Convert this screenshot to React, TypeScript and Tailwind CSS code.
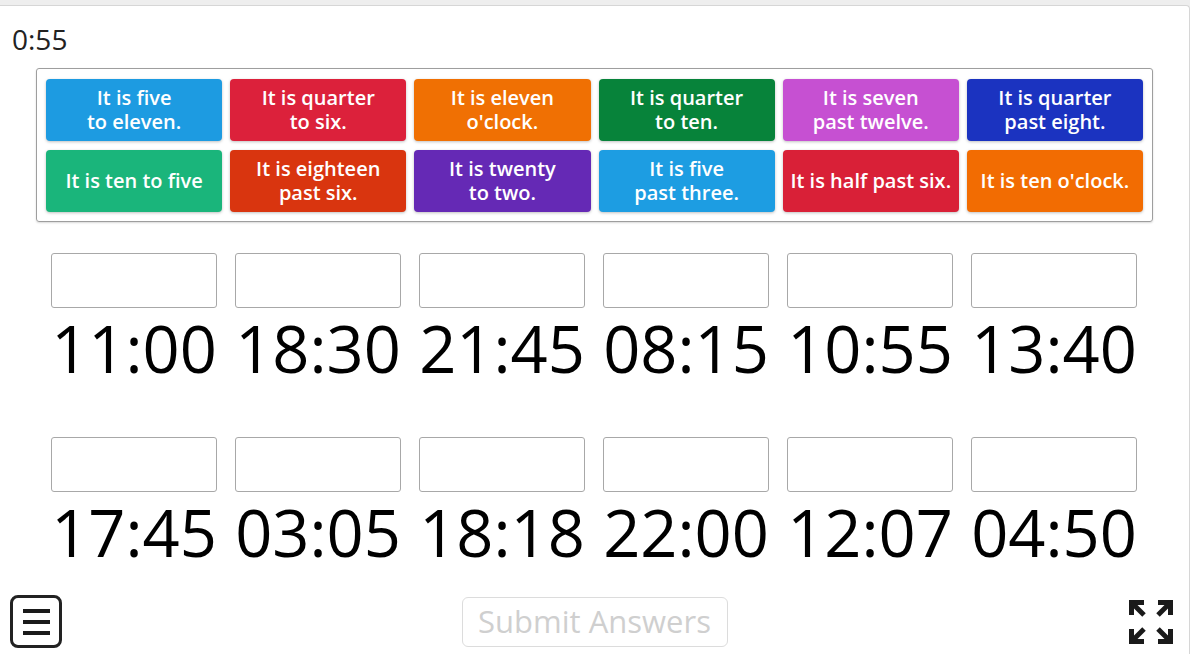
import React from "react";

const tiles: { text: string[]; bg: string }[] = [
  { text: ["It is five", "to eleven."], bg: "bg-[#1d9be1]" },
  { text: ["It is quarter", "to six."], bg: "bg-[#dc213b]" },
  { text: ["It is eleven", "o'clock."], bg: "bg-[#f07003]" },
  { text: ["It is quarter", "to ten."], bg: "bg-[#07833a]" },
  { text: ["It is seven", "past twelve."], bg: "bg-[#c650d2]" },
  { text: ["It is quarter", "past eight."], bg: "bg-[#1b33c0]" },
  { text: ["It is ten to five"], bg: "bg-[#1ab57b]" },
  { text: ["It is eighteen", "past six."], bg: "bg-[#d9350f]" },
  { text: ["It is twenty", "to two."], bg: "bg-[#6529b5]" },
  { text: ["It is five", "past three."], bg: "bg-[#1d9de2]" },
  { text: ["It is half past six."], bg: "bg-[#d92037]" },
  { text: ["It is ten o'clock."], bg: "bg-[#f26c02]" },
];

const times = [
  "11:00",
  "18:30",
  "21:45",
  "08:15",
  "10:55",
  "13:40",
  "17:45",
  "03:05",
  "18:18",
  "22:00",
  "12:07",
  "04:50",
];

function FullscreenIcon() {
  return (
    <svg width="46" height="46" viewBox="0 0 46 46" fill="none">
      <g stroke="#1a1a1a" strokeWidth="5" strokeLinecap="butt" strokeLinejoin="miter">
        <path d="M3.5 16 V3.5 H16" />
        <path d="M3.5 3.5 L16 16" />
        <path d="M42.5 16 V3.5 H30" />
        <path d="M42.5 3.5 L30 16" />
        <path d="M3.5 30 V42.5 H16" />
        <path d="M3.5 42.5 L16 30" />
        <path d="M42.5 30 V42.5 H30" />
        <path d="M42.5 42.5 L30 30" />
      </g>
    </svg>
  );
}

export default function App() {
  return (
    <div className="w-[1190px] h-[654px] bg-[#eeeeee] pt-[5px] overflow-hidden font-['Open_Sans',sans-serif]">
      <div className="w-[1190px] h-[649px] bg-white border-t border-r border-[#d6d6d6] rounded-tr-[4px] flex flex-col">
        <div className="pt-[15px] pl-[12px] text-[28px] leading-[36px] text-[#222]">0:55</div>

        <div className="mt-[11px] ml-[36px] w-[1117px] border border-[#9e9e9e] rounded-[3px] shadow-[0_1px_2px_rgba(0,0,0,0.15)] pt-[10px] pb-[9px] px-[9px] grid grid-cols-6 gap-x-[8px] gap-y-[9px]">
          {tiles.map((t, i) => (
            <div
              key={i}
              className={`${t.bg} h-[62px] rounded-[4px] shadow-[0_1px_3px_rgba(0,0,0,0.25)] flex flex-col items-center justify-center text-white font-semibold text-[20px] leading-[24px] text-center whitespace-nowrap`}
            >
              {t.text.map((line, j) => (
                <div key={j} className="h-[24px] leading-[24px] overflow-visible">
                  {line}
                </div>
              ))}
            </div>
          ))}
        </div>

        <div className="mt-[31px] ml-[42px] grid grid-cols-[repeat(6,184px)] gap-y-[56px]">
          {times.map((tm, i) => (
            <div key={i} className="flex flex-col items-center">
              <div className="w-[166px] h-[55px] border border-[#a8a8a8] rounded-[3px] bg-white" />
              <div className="mt-[7px] text-[65px] leading-[66px] text-black whitespace-nowrap">{tm}</div>
            </div>
          ))}
        </div>

        <div className="mt-[30px] px-[10px] grid grid-cols-[1fr_auto_1fr] items-center">
          <div className="flex justify-start">
            <div className="w-[52px] h-[53px] border-[3px] border-[#222] rounded-[8px] flex flex-col items-center justify-center gap-[7px]">
              <div className="w-[27px] h-[4px] bg-[#1a1a1a]" />
              <div className="w-[27px] h-[4px] bg-[#1a1a1a]" />
              <div className="w-[27px] h-[4px] bg-[#1a1a1a]" />
            </div>
          </div>
          <div className="w-[266px] h-[50px] border-[1.5px] border-[#dcdcdc] rounded-[6px] flex items-center justify-center text-[31px] text-[#cfcfcf]">
            Submit Answers
          </div>
          <div className="flex justify-end pr-[5px]">
            <FullscreenIcon />
          </div>
        </div>
      </div>
    </div>
  );
}
